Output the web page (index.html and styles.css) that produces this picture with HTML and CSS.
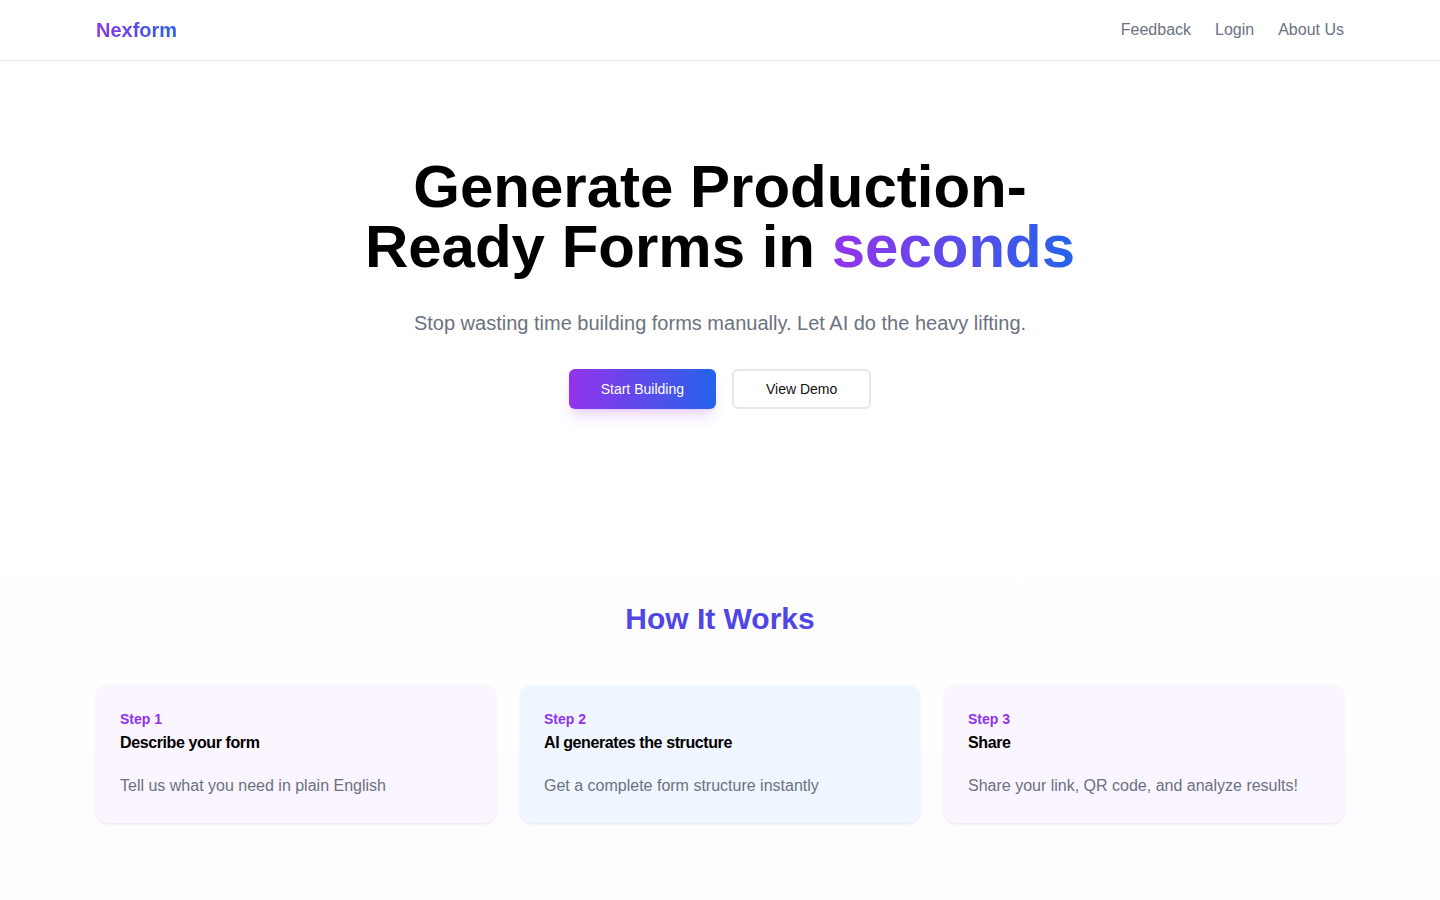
FILE: index.html
```html
<!DOCTYPE html>
<html lang="en">
<head>
<meta charset="utf-8">
<title>Nexform</title>
<link rel="stylesheet" href="styles.css">
</head>
<body>
<header class="header">
  <div class="container header-inner">
    <a class="logo" href="#">Nexform</a>
    <nav class="nav">
      <a href="#">Feedback</a>
      <a href="#">Login</a>
      <a href="#">About Us</a>
    </nav>
  </div>
</header>
<main>
  <section class="hero">
    <div class="container hero-inner">
      <h1 class="hero-title">Generate Production-Ready Forms in <span class="grad-text">seconds</span></h1>
      <p class="hero-sub">Stop wasting time building forms manually. Let AI do the heavy lifting.</p>
      <div class="hero-actions">
        <a class="btn btn-primary" href="#">Start Building</a>
        <a class="btn btn-outline" href="#">View Demo</a>
      </div>
    </div>
  </section>
  <section class="how">
    <div class="container">
      <h2 class="how-title">How It Works</h2>
      <div class="cards">
        <div class="card card-purple">
          <div class="step">Step 1</div>
          <div class="card-title">Describe your form</div>
          <p class="card-desc">Tell us what you need in plain English</p>
        </div>
        <div class="card card-blue">
          <div class="step">Step 2</div>
          <div class="card-title">AI generates the structure</div>
          <p class="card-desc">Get a complete form structure instantly</p>
        </div>
        <div class="card card-purple">
          <div class="step">Step 3</div>
          <div class="card-title">Share</div>
          <p class="card-desc">Share your link, QR code, and analyze results!</p>
        </div>
      </div>
    </div>
  </section>
</main>
</body>
</html>
```
FILE: styles.css
```css
* { box-sizing: border-box; }
html, body { margin: 0; padding: 0; }
body {
  font-family: "Liberation Sans", Arial, sans-serif;
  color: #111827;
  background: #ffffff;
}
a { text-decoration: none; color: inherit; }
.container {
  max-width: 1280px;
  margin: 0 auto;
  padding: 0 16px;
}
.header {
  border-bottom: 1px solid #e5e7eb;
  background: #fff;
}
.header-inner {
  height: 60px;
  display: flex;
  align-items: center;
  justify-content: space-between;
}
.logo {
  font-size: 20px;
  font-weight: 700;
  line-height: 28px;
  background: linear-gradient(90deg, #9333ea, #2563eb);
  -webkit-background-clip: text;
  background-clip: text;
  color: transparent;
}
.nav {
  display: flex;
  gap: 24px;
}
.nav a {
  font-size: 16px;
  line-height: 24px;
  color: #6b7280;
}
.hero {
  padding: 96px 0;
}
.hero-inner {
  display: flex;
  flex-direction: column;
  align-items: center;
  text-align: center;
}
.hero-title {
  max-width: 768px;
  margin: 0;
  font-size: 60px;
  line-height: 60px;
  font-weight: 700;
  color: #000;
}
.grad-text {
  background: linear-gradient(90deg, #9333ea, #2563eb);
  -webkit-background-clip: text;
  background-clip: text;
  color: transparent;
}
.hero-sub {
  margin: 32px 0 0;
  font-size: 20px;
  line-height: 28px;
  color: #6b7280;
}
.hero-actions {
  margin-top: 32px;
  display: flex;
  gap: 16px;
}
.btn {
  display: inline-flex;
  align-items: center;
  justify-content: center;
  height: 40px;
  padding: 0 32px;
  font-size: 14px;
  border-radius: 6px;
}
.btn-primary {
  color: #fff;
  background: linear-gradient(90deg, #9333ea, #2563eb);
  box-shadow: 0 10px 15px -3px rgba(147, 51, 234, 0.18), 0 4px 6px -4px rgba(147, 51, 234, 0.18);
}
.btn-outline {
  background: #fff;
  color: #111;
  border: 2px solid #e5e7eb;
}
.how {
  padding: 96px 0;
  background: linear-gradient(to bottom, #ffffff, #fcfbfe);
}
.how-title {
  margin: 0 0 48px;
  text-align: center;
  font-size: 30px;
  line-height: 36px;
  font-weight: 700;
  color: #4f46e5;
}
.cards {
  display: grid;
  grid-template-columns: repeat(3, 1fr);
  gap: 24px;
}
.card {
  border-radius: 12px;
  padding: 24px 24px 25px;
  box-shadow: 0 1px 3px rgba(0, 0, 0, 0.08), 0 1px 2px -1px rgba(0, 0, 0, 0.06);
}
.card-purple { background: #faf5ff; }
.card-blue { background: #eff6ff; }
.step {
  font-size: 14px;
  line-height: 20px;
  font-weight: 700;
  color: #9333ea;
}
.card-title {
  margin-top: 2px;
  font-size: 16px;
  line-height: 24px;
  font-weight: 700;
  letter-spacing: -0.025em;
  color: #000;
}
.card-desc {
  margin: 19px 0 0;
  font-size: 16px;
  line-height: 24px;
  color: #6b7280;
}
```
